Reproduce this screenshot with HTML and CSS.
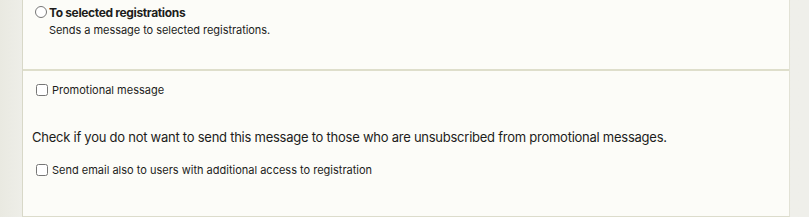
FILE: index.html
```html
<!DOCTYPE html>
<html>
<head>
<meta charset="utf-8">
<link rel="stylesheet" href="styles.css">
</head>
<body>
<div class="page">
  <div class="panel">
    <section class="section top">
      <label class="radio-row">
        <input type="radio" name="target" class="radio">
        <span class="radio-title">To selected registrations</span>
      </label>
      <div class="radio-desc">Sends a message to selected registrations.</div>
    </section>
    <section class="section bottom">
      <label class="check-row first">
        <input type="checkbox" class="check">
        <span>Promotional message</span>
      </label>
      <p class="help">Check if you do not want to send this message to those who are unsubscribed from promotional messages.</p>
      <label class="check-row">
        <input type="checkbox" class="check">
        <span>Send email also to users with additional access to registration</span>
      </label>
    </section>
  </div>
</div>
</body>
</html>
```
FILE: styles.css
```css
html, body {
  margin: 0;
  padding: 0;
}
body {
  width: 809px;
  height: 217px;
  overflow: hidden;
  background: #efefea;
  font-family: Inter, "Liberation Sans", sans-serif;
  color: #1d1d1b;
}
.page {
  display: flex;
  height: 217px;
  padding-left: 22px;
  background: linear-gradient(90deg, #e9e9e1 0px, #eeeee8 22px, #efefea 100%);
}
.panel {
  width: 766px;
  height: 216px;
  background: #fcfcf8;
  border-left: 1px solid #d8d8c8;
  border-right: 1px solid #e2e2d6;
  border-bottom: 1px solid #dcdccc;
  display: flex;
  flex-direction: column;
}
.section.top {
  border-bottom: 2px solid #dedecb;
  padding-left: 12px;
  box-sizing: border-box;
  height: 71px;
}
.radio-row {
  display: flex;
  align-items: center;
  height: 12px;
  margin-top: 6px;
}
.radio {
  margin: 0;
  width: 12px;
  height: 12px;
}
.radio-title {
  font-weight: 700;
  font-size: 12px;
  margin-left: 2px;
  letter-spacing: -0.35px;
}
.radio-desc {
  font-size: 11px;
  margin-left: 14px;
  margin-top: 5px;
  letter-spacing: -0.05px;
}
.section.bottom {
  padding-left: 9px;
}
.check-row {
  display: flex;
  align-items: center;
  font-size: 11px;
  padding-left: 4px;
}
.check-row.first {
  margin-top: 12px;
}
.check {
  margin: 0 4px 0 0;
  width: 12px;
  height: 12px;
}
.help {
  font-size: 13px;
  letter-spacing: -0.25px;
  margin: 32px 0 18px 0;
}
```
